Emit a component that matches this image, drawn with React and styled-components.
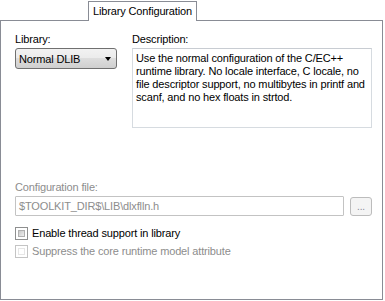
import React from 'react';
import styled, { createGlobalStyle } from 'styled-components';

const GlobalStyle = createGlobalStyle`
  body {
    margin: 0;
    background: #ffffff;
    font-family: 'Liberation Sans', Arial, sans-serif;
    font-size: 11px;
    letter-spacing: -0.15px;
    color: #000000;
  }
`;

const Page = styled.div`
  width: 385px;
  height: 301px;
  padding-top: 1px;
  box-sizing: border-box;
`;

const TabStrip = styled.div`
  display: flex;
  padding-left: 88px;
  position: relative;
  z-index: 1;
`;

const Tab = styled.div`
  width: 109px;
  height: 20px;
  box-sizing: border-box;
  border: 1px solid #898c95;
  border-bottom: none;
  background: #ffffff;
  margin-bottom: -1px;
  display: flex;
  align-items: center;
  justify-content: center;
  line-height: 13px;
`;

const Panel = styled.div`
  width: 383px;
  height: 280px;
  box-sizing: border-box;
  border: 1px solid #898c95;
  padding: 12px 0 0 14px;
  display: flex;
  flex-direction: column;
`;

const TopRow = styled.div`
  display: flex;
  gap: 15px;
`;

const Field = styled.div`
  display: flex;
  flex-direction: column;
  width: ${p => p.width}px;
`;

const Label = styled.div`
  line-height: 13px;
  margin-bottom: 2px;
  color: ${p => (p.disabled ? '#8d8d8d' : '#000000')};
`;

const Combo = styled.div`
  height: 21px;
  box-sizing: border-box;
  border: 1px solid #707070;
  border-radius: 3px;
  background: linear-gradient(#f2f2f2 0%, #ebebeb 50%, #dddddd 50%, #cfcfcf 100%);
  display: flex;
  align-items: center;
  justify-content: space-between;
  padding: 0 5px 0 3px;
`;

const Arrow = styled.span`
  width: 0;
  height: 0;
  border-left: 3.5px solid transparent;
  border-right: 3.5px solid transparent;
  border-top: 4px solid #000000;
  margin-top: 1px;
`;

const TextBox = styled.div`
  height: 80px;
  box-sizing: border-box;
  border: 1px solid #d6dbe0;
  border-top-color: #c8ccd2;
  padding: 3px 3px 2px;
  line-height: 13px;
`;

const ConfigBlock = styled.div`
  margin-top: 53px;
  display: flex;
  flex-direction: column;
`;

const PathRow = styled.div`
  display: flex;
  gap: 6px;
`;

const PathInput = styled.div`
  width: 329px;
  height: 20px;
  box-sizing: border-box;
  border: 1px solid #c3c3c3;
  border-radius: 1px;
  color: #8d8d8d;
  padding: 0 3px;
  display: flex;
  align-items: center;
`;

const BrowseButton = styled.div`
  width: 22px;
  height: 19px;
  box-sizing: border-box;
  border: 1px solid #bcbcbc;
  border-radius: 3px;
  background: #f4f4f4;
  color: #8a8a9a;
  display: flex;
  align-items: flex-end;
  justify-content: center;
  padding-bottom: 3px;
  font-size: 10px;
  line-height: 10px;
  margin-top: 1px;
`;

const Checks = styled.div`
  margin-top: 11px;
  display: flex;
  flex-direction: column;
  gap: 5px;
`;

const CheckRow = styled.div`
  display: flex;
  align-items: center;
  gap: 4px;
  line-height: 13px;
  color: ${p => (p.disabled ? '#8d8d8d' : '#000000')};
`;

const Box = styled.span`
  width: 13px;
  height: 13px;
  box-sizing: border-box;
  border: 1px solid ${p => (p.disabled ? '#c4c4c4' : '#8e8f8f')};
  background: #ffffff;
  padding: 2px;
  display: flex;
  &::after {
    content: '';
    flex: 1;
    background: ${p =>
      p.disabled ? '#ffffff' : 'linear-gradient(135deg, #c8c8c8, #efefef)'};
    border: 1px solid ${p => (p.disabled ? '#e6e6e6' : '#b0b0b0')};
  }
`;

export default function App() {
  return (
    <Page>
      <GlobalStyle />
      <TabStrip>
        <Tab>Library Configuration</Tab>
      </TabStrip>
      <Panel>
        <TopRow>
          <Field width={102}>
            <Label>Library:</Label>
            <Combo>
              <span>Normal DLIB</span>
              <Arrow />
            </Combo>
          </Field>
          <Field width={240}>
            <Label>Description:</Label>
            <TextBox>
              Use the normal configuration of the C/EC++ runtime library. No locale interface, C locale, no
              file descriptor support, no multibytes in printf and scanf, and no hex floats in strtod.
            </TextBox>
          </Field>
        </TopRow>
        <ConfigBlock>
          <Label disabled>Configuration file:</Label>
          <PathRow>
            <PathInput>$TOOLKIT_DIR$\LIB\dlxflln.h</PathInput>
            <BrowseButton>...</BrowseButton>
          </PathRow>
        </ConfigBlock>
        <Checks>
          <CheckRow>
            <Box />
            Enable thread support in library
          </CheckRow>
          <CheckRow disabled>
            <Box disabled />
            Suppress the core runtime model attribute
          </CheckRow>
        </Checks>
      </Panel>
    </Page>
  );
}
